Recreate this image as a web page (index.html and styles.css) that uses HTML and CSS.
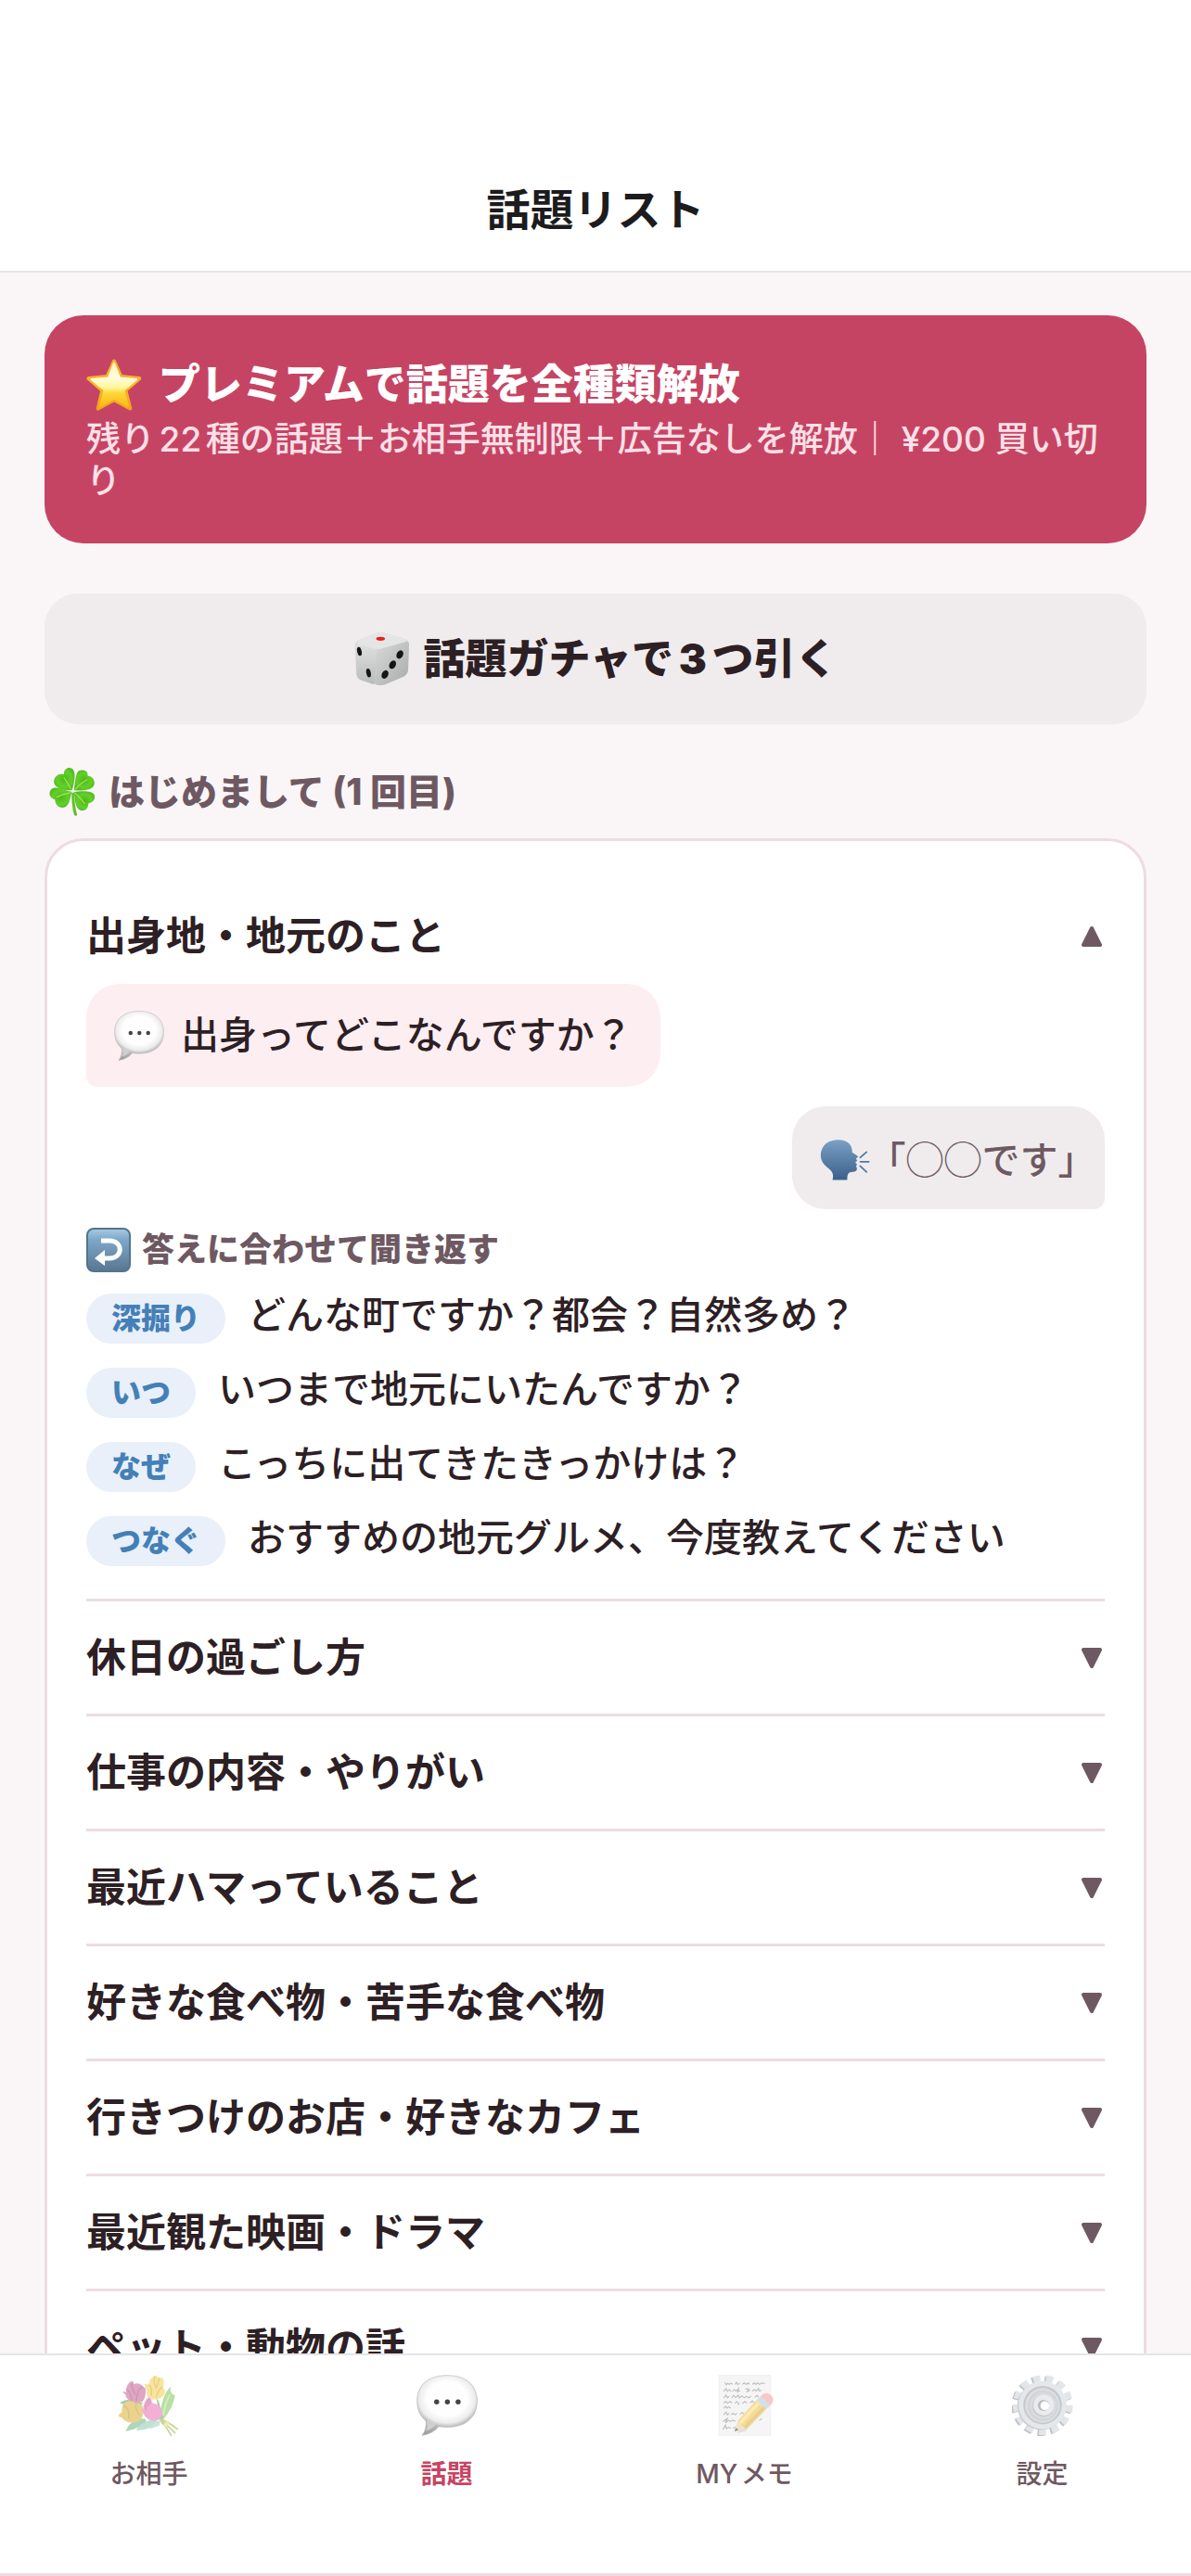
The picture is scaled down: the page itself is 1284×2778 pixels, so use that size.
FILE: index.html
```html
<!DOCTYPE html>
<html lang="ja">
<head>
    <meta charset="UTF-8">
    <meta name="viewport" content="width=device-width, initial-scale=1.0">
    <title>話題リスト</title>
    <link rel="stylesheet" href="styles.css">
</head>
<body>
    <!-- Shared icons -->
    <svg class="sprite" aria-hidden="true">
        <defs>
            <radialGradient id="bubbleFill" cx="50%" cy="45%" r="56%">
                <stop offset="0.6" stop-color="#fefefe"/>
                <stop offset="0.84" stop-color="#ececec"/>
                <stop offset="1" stop-color="#b4b4b4"/>
            </radialGradient>
            <linearGradient id="bubbleTail" x1="0" y1="0" x2="0" y2="1">
                <stop offset="0" stop-color="#d8d8d8"/>
                <stop offset="1" stop-color="#959595"/>
            </linearGradient>
        </defs>
        <symbol id="icon-bubble" viewBox="146 68 194 194">
            <path d="M176 208Q180 242 164 260Q200 254 218 230Z" fill="url(#bubbleTail)" stroke="#a8a8a8" stroke-width="2"/>
            <path d="M243 70C302 70 338 100 338 151C338 203 302 234 243 234C184 234 148 203 148 151C148 100 184 70 243 70Z" fill="url(#bubbleFill)" stroke="#b8b8b8" stroke-width="2"/>
            <path d="M178 206Q184 232 176 246Q194 242 208 224Z" fill="#cfcfcf"/>
            <circle cx="210" cy="154" r="8" fill="#444"/>
            <circle cx="244" cy="154" r="8" fill="#444"/>
            <circle cx="278" cy="154" r="8" fill="#444"/>
        </symbol>
    </svg>

    <header class="header">
        <h1>話題リスト</h1>
    </header>

    <main class="content">
        <button class="premium" type="button">
            <span class="premium-title">
                <svg class="icon-lg" viewBox="30 40 182 174" aria-hidden="true">
                    <defs>
                        <linearGradient id="starEdge" x1="0" y1="0" x2="0" y2="1">
                            <stop offset="0" stop-color="#f4a93a"/>
                            <stop offset="0.5" stop-color="#fbb52a"/>
                            <stop offset="1" stop-color="#f2a21c"/>
                        </linearGradient>
                        <linearGradient id="starFill" x1="0" y1="0" x2="0" y2="1">
                            <stop offset="0" stop-color="#fff3a8"/>
                            <stop offset="0.3" stop-color="#fffde0"/>
                            <stop offset="0.56" stop-color="#fff7a2"/>
                            <stop offset="0.7" stop-color="#fdd835"/>
                            <stop offset="1" stop-color="#fbb81c"/>
                        </linearGradient>
                    </defs>
                    <path d="M121 50L143 100L203 106L158 145L173 204L121 176L69 204L83 145L38 106L99 100Z" fill="url(#starEdge)" stroke="url(#starEdge)" stroke-width="13" stroke-linejoin="round"/>
                    <path d="M121 56L139 105L194 109L152 144L166 197L121 171L76 197L90 144L47 109L103 105Z" fill="url(#starFill)" stroke="url(#starFill)" stroke-width="7" stroke-linejoin="round"/>
                </svg>
                プレミアムで話題を全種類解放
            </span>
            <span class="premium-text">残り22種の話題＋お相手無制限＋広告なしを解放｜ ¥200 買い切り</span>
        </button>

        <button class="gacha" type="button">
            <svg class="icon-lg" viewBox="38 36 176 176" aria-hidden="true">
                <defs>
                    <linearGradient id="diceLeft" x1="0" y1="0" x2="0" y2="1">
                        <stop offset="0" stop-color="#dfe0e0"/>
                        <stop offset="1" stop-color="#b9bcbc"/>
                    </linearGradient>
                    <linearGradient id="diceRight" x1="0" y1="0" x2="1" y2="1">
                        <stop offset="0" stop-color="#d9dbdb"/>
                        <stop offset="1" stop-color="#a9abab"/>
                    </linearGradient>
                </defs>
                <path d="M40 84Q40 68 56 62L106 42Q120 37 134 41L196 58Q212 64 211 80L208 158Q207 172 195 178L136 203Q122 209 108 205L58 189Q46 184 44 170Z" fill="#d5d7d7"/>
                <path d="M42 80Q42 74 50 75L98 88Q109 92 108 104L104 196Q102 206 92 201L58 189Q47 184 45 170Z" fill="url(#diceLeft)"/>
                <path d="M211 74L208 158Q207 172 195 178L136 203Q122 209 106 204Q101 198 102 188L107 106Q108 94 120 90L200 68Q210 66 211 74Z" fill="url(#diceRight)"/>
                <path d="M56 62L106 42Q120 37 134 41L196 58Q208 63 198 69L124 90Q112 94 100 90L50 76Q43 70 56 62Z" fill="#e4e6e6"/>
                <ellipse cx="121" cy="59" rx="14" ry="6" fill="#ef1c1c"/>
                <ellipse cx="54" cy="99" rx="7" ry="14" transform="rotate(-12 54 99)" fill="#151515"/>
                <ellipse cx="83" cy="167" rx="7" ry="14" transform="rotate(-12 83 167)" fill="#151515"/>
                <ellipse cx="182" cy="109" rx="10" ry="14" transform="rotate(28 182 109)" fill="#151515"/>
                <ellipse cx="159" cy="141" rx="10" ry="14" transform="rotate(28 159 141)" fill="#151515"/>
                <ellipse cx="135" cy="172" rx="10" ry="14" transform="rotate(28 135 172)" fill="#151515"/>
            </svg>
            話題ガチャで3つ引く
        </button>

        <h2 class="section-title">
            <svg class="icon-md" viewBox="22 24 148 156" aria-hidden="true">
                <defs>
                    <radialGradient id="leaf">
                        <stop offset="0" stop-color="#4fb817"/>
                        <stop offset="0.7" stop-color="#62d02a"/>
                        <stop offset="1" stop-color="#58bd24"/>
                    </radialGradient>
                </defs>
                <path d="M94 104Q93 140 101 172Q105 180 111 174Q102 142 102 104Z" fill="#62c02c"/>
                <g fill="url(#leaf)">
                    <path d="M95 97C78 98 44 94 39 74C36 56 54 42 70 48C68 30 84 22 96 30C110 44 101 76 95 97Z"/>
                    <path d="M101 97C104 76 106 48 114 38C128 30 146 36 144 52C160 52 170 70 162 84C150 100 116 98 101 97Z"/>
                    <path d="M94 101C74 100 44 80 30 94C20 106 26 122 42 126C42 144 56 154 72 150C88 142 90 118 94 101Z"/>
                    <path d="M102 102C122 100 154 96 164 110C170 124 160 136 146 138C146 154 134 164 120 159C104 150 103 122 102 102Z"/>
                </g>
                <g fill="none" stroke="#a4ec62" stroke-width="3" stroke-linecap="round">
                    <path d="M91 93Q82 74 70 58M105 94Q122 74 142 64M90 104Q66 108 48 118M105 106Q122 122 134 138"/>
                </g>
            </svg>
            はじめまして (1 回目)
        </h2>

        <section class="card">
            <article class="topic">
                <button class="topic-head open" type="button" aria-expanded="true">出身地・地元のこと<svg class="arrow" viewBox="0 0 24 24" aria-hidden="true"><path d="M12 3L21 21H3Z"/></svg></button>
                <div class="topic-body">
                    <p class="bubble bubble-ask">
                        <svg class="icon-md" aria-hidden="true"><use href="#icon-bubble"/></svg>
                        出身ってどこなんですか？
                    </p>
                    <p class="bubble bubble-answer">
                        <svg class="icon-md" viewBox="88 136 156 156" aria-hidden="true">
                            <defs>
                                <linearGradient id="headFill" x1="0" y1="0" x2="0" y2="1">
                                    <stop offset="0" stop-color="#7ba0c4"/>
                                    <stop offset="1" stop-color="#3a618b"/>
                                </linearGradient>
                            </defs>
                            <path d="M127 282C132 262 126 254 113 244C96 232 88 216 91 197C95 170 118 156 147 157C174 158 190 173 188 196L205 207Q208 212 200 215L204 222L198 227L204 234L200 238Q208 252 196 256L181 258Q172 262 173 282Z" fill="url(#headFill)"/>
                            <path d="M213 212L233 195M214 225H240M213 238L233 257" stroke="#4a78a8" stroke-width="5" stroke-linecap="round"/>
                        </svg>
                        「◯◯です」
                    </p>
                    <h3 class="follow-title">
                        <svg class="icon-sm" viewBox="0 0 48 48" aria-hidden="true">
                            <defs>
                                <linearGradient id="keyFill" x1="0" y1="0" x2="0" y2="1">
                                    <stop offset="0" stop-color="#a9cbe2"/>
                                    <stop offset="0.25" stop-color="#7fa8c9"/>
                                    <stop offset="1" stop-color="#587690"/>
                                </linearGradient>
                            </defs>
                            <rect x="1" y="1" width="46" height="46" rx="7" fill="url(#keyFill)" stroke="#52758f" stroke-width="2"/>
                            <path d="M16 14H25C40 14 40 33 25 33H18" fill="none" stroke="#fff" stroke-width="5"/>
                            <path d="M9 33L20 24V41Z" fill="#fff"/>
                        </svg>
                        答えに合わせて聞き返す
                    </h3>
                    <ul class="follow-list">
                        <li><span class="chip">深掘り</span>どんな町ですか？都会？自然多め？</li>
                        <li><span class="chip">いつ</span>いつまで地元にいたんですか？</li>
                        <li><span class="chip">なぜ</span>こっちに出てきたきっかけは？</li>
                        <li><span class="chip">つなぐ</span>おすすめの地元グルメ、今度教えてください</li>
                    </ul>
                </div>
            </article>
            <button class="topic-head" type="button" aria-expanded="false">休日の過ごし方<svg class="arrow" viewBox="0 0 24 24" aria-hidden="true"><path d="M3 3H21L12 21Z"/></svg></button>
            <button class="topic-head" type="button" aria-expanded="false">仕事の内容・やりがい<svg class="arrow" viewBox="0 0 24 24" aria-hidden="true"><path d="M3 3H21L12 21Z"/></svg></button>
            <button class="topic-head" type="button" aria-expanded="false">最近ハマっていること<svg class="arrow" viewBox="0 0 24 24" aria-hidden="true"><path d="M3 3H21L12 21Z"/></svg></button>
            <button class="topic-head" type="button" aria-expanded="false">好きな食べ物・苦手な食べ物<svg class="arrow" viewBox="0 0 24 24" aria-hidden="true"><path d="M3 3H21L12 21Z"/></svg></button>
            <button class="topic-head" type="button" aria-expanded="false">行きつけのお店・好きなカフェ<svg class="arrow" viewBox="0 0 24 24" aria-hidden="true"><path d="M3 3H21L12 21Z"/></svg></button>
            <button class="topic-head" type="button" aria-expanded="false">最近観た映画・ドラマ<svg class="arrow" viewBox="0 0 24 24" aria-hidden="true"><path d="M3 3H21L12 21Z"/></svg></button>
            <button class="topic-head" type="button" aria-expanded="false">ペット・動物の話<svg class="arrow" viewBox="0 0 24 24" aria-hidden="true"><path d="M3 3H21L12 21Z"/></svg></button>
        </section>
    </main>

    <nav class="tabbar">
        <a class="tab" href="#partner">
            <svg class="tab-icon" viewBox="142 66 196 196" aria-hidden="true">
                <path d="M164 247Q178 208 226 206Q238 218 214 230Q190 242 164 247Z" fill="#5fae78"/>
                <path d="M198 245Q212 214 262 208Q268 226 240 236Q220 244 198 245Z" fill="#7fc4a4"/>
                <path d="M240 240Q244 222 272 212L274 228Z" fill="#8ccfb0"/>
                <path d="M272 206Q280 130 308 104Q304 128 322 132Q318 168 286 208Z" fill="#74c150"/>
                <path d="M284 196Q290 160 306 128" fill="none" stroke="#a8e070" stroke-width="6"/>
                <path d="M146 158Q160 140 200 150L222 158L196 166Z" fill="#4f9a62"/>
                <path d="M262 140L270 150L288 218L276 214Z" fill="#5a9c4c"/>
                <path d="M274 208Q298 214 330 240M274 210Q300 228 322 252M276 214Q298 236 310 260" fill="none" stroke="#8fae3c" stroke-width="5" stroke-linecap="round"/>
                <path d="M284 226L298 214L304 222L292 234Z" fill="#e8d84a"/>
                <path d="M152 120L166 122Q164 98 180 88Q190 84 190 96Q208 88 220 104L228 110Q230 140 218 152Q200 158 184 152Q166 146 164 130Z" fill="#c0508c"/>
                <path d="M166 112Q180 120 184 150M184 92Q182 110 196 130M220 104Q202 108 198 150" fill="none" stroke="#93306a" stroke-width="4"/>
                <path d="M224 94L238 98Q240 76 258 68L274 76Q288 74 286 94L284 108Q296 114 286 132Q270 148 246 144Q228 136 232 118Z" fill="#f2cc3c"/>
                <path d="M238 98Q250 104 246 134M258 70Q250 88 262 108L272 78M284 104Q268 110 262 140" fill="none" stroke="#d49c18" stroke-width="4"/>
                <path d="M142 194L152 186Q150 160 168 152Q184 146 196 156Q216 156 220 172Q224 200 208 214Q184 226 160 212Q154 202 142 200Z" fill="#d4a820"/>
                <path d="M156 164Q178 170 174 206M200 156Q190 168 208 196" fill="none" stroke="#b08614" stroke-width="4"/>
                <path d="M216 182L220 176Q222 148 238 138Q248 142 248 156Q278 160 282 186Q282 208 258 214Q230 212 222 192Z" fill="#e664ac"/>
                <path d="M224 168Q230 148 238 140Q248 144 246 158Q230 164 230 186Z" fill="#c4488e"/>
            </svg>
            お相手
        </a>
        <a class="tab active" href="#topics" aria-current="page">
            <svg class="tab-icon" aria-hidden="true"><use href="#icon-bubble"/></svg>
            話題
        </a>
        <a class="tab" href="#memo">
            <svg class="tab-icon" viewBox="1106 68 196 196" aria-hidden="true">
                <rect x="1121" y="70" width="165" height="193" fill="#ececec" stroke="#dcdcdc" stroke-width="2"/>
                <g fill="none" stroke="#777" stroke-width="3">
                    <path d="M1140 92l4 8 5-5 5 4 6-4 5 4M1172 99l6-7 3 7 8-4M1196 99l6-5 6 5 6-5 6 5M1228 99l6-5 5 5 6-5 6 5 7-5 10 2"/>
                    <path d="M1136 121l8-9 4 9 6-5 6 5M1164 121l7-6 5 5 8-8-3 11 8-5M1206 113h10l-5 9 10-4M1228 121l6-6 6 5 8-8 2 8 8-2"/>
                    <path d="M1136 142l8-9 4 9 6-5M1162 142l6-8 7 7 8-8 3 9 8-6 8 5 8-4 7 5 8-6M1236 140l8-6 4 6"/>
                    <path d="M1136 158l7-4 6 5 7-5 7 4M1172 160l6-6 7 5-3 6M1196 160l8-6 7 4M1220 158l8-6 6 6"/>
                    <path d="M1136 175l7-6 4 6 6-4 6 4M1136 196l8-9 4 9 6-5M1160 196l6-5 7 5 6-5M1188 194l8-5 5 5"/>
                    <path d="M1134 218l8-6 6-4-6 14 9-8 7 4 8-5 8 4M1250 214l8-5M1134 244l8-15 3 12 7-5 8 4M1166 240l8-5"/>
                </g>
                <path d="M1178 254L1204 250L1290 160L1276 148Z" fill="#999" opacity="0.5"/>
                <path d="M1171 250L1181 216L1208 240Z" fill="#e8c897"/>
                <path d="M1171 250L1175 237L1184 245Z" fill="#333"/>
                <path d="M1181 216L1241 150L1272 178L1208 243L1200 236L1192 232L1190 223Z" fill="#eeb82c"/>
                <path d="M1186 218L1244 155L1252 162L1194 226Z" fill="#fad968"/>
                <path d="M1206 240L1270 176L1263 170L1201 233Z" fill="#d59d20"/>
                <path d="M1241 150L1254 137L1286 166L1272 178Z" fill="#aac2d2"/>
                <path d="M1254 137Q1268 122 1285 131Q1304 146 1286 166Z" fill="#ee9098"/>
            </svg>
            MYメモ
        </a>
        <a class="tab" href="#settings">
            <svg class="tab-icon" viewBox="92 68 194 194" aria-hidden="true">
                <g fill="none" stroke-width="24" stroke-dasharray="22 18">
                    <circle cx="185" cy="167" r="83" pathLength="520" stroke="#82888c"/>
                    <circle cx="190" cy="164" r="83" pathLength="520" stroke="#c9ced3"/>
                </g>
                <circle cx="185" cy="167" r="76" fill="#969b9f"/>
                <circle cx="189" cy="164" r="76" fill="#cdd2d8"/>
                <circle cx="189" cy="164" r="61" fill="#8e9498"/>
                <circle cx="189" cy="165" r="55" fill="#bbc0c4"/>
                <circle cx="190" cy="166" r="48" fill="#a4aaae"/>
                <circle cx="191" cy="166" r="43" fill="#b3b9bd"/>
                <circle cx="191" cy="167" r="34" fill="#8f9599"/>
                <circle cx="193" cy="164" r="33" fill="#d4d8de"/>
                <circle cx="192" cy="165" r="18" fill="#777c80"/>
                <circle cx="196" cy="166" r="14" fill="#fff"/>
            </svg>
            設定
        </a>
    </nav>
</body>
</html>
```
FILE: styles.css
```css
* {
    box-sizing: border-box;
}
body {
    font-family: Inter, "Noto Sans CJK JP", sans-serif;
    text-autospace: normal;
    margin: 0;
    display: flex;
    flex-direction: column;
    height: 100vh;
    background-color: #faf6f8;
    color: #2d2024;
}
button {
    font: inherit;
    color: inherit;
    border: none;
    cursor: pointer;
}
h1, h2, h3, p, ul {
    margin: 0;
    padding: 0;
}
.sprite {
    position: absolute;
    width: 0;
    height: 0;
}
.header {
    padding: 184px 48px 24px;
    background-color: #fff;
    border-bottom: 2px solid #e5e5e7;
    text-align: center;
    color: #1c1c1e;
}
.header h1 {
    font-size: 47px;
    line-height: 84px;
    font-weight: 700;
}
.content {
    flex: 1;
    min-height: 0;
    overflow: hidden;
    padding: 46px 48px 0;
}

/* Icon sizes */
.icon-lg {
    width: 60px;
    height: 60px;
    flex: none;
}
.icon-md {
    width: 54px;
    height: 54px;
    flex: none;
}
.icon-sm {
    width: 48px;
    height: 48px;
    flex: none;
}

.premium {
    display: flex;
    flex-direction: column;
    gap: 6px;
    width: 100%;
    padding: 45px;
    border-radius: 42px;
    background-color: #c64463;
    text-align: left;
}
.premium-title {
    display: flex;
    align-items: center;
    gap: 18px;
    font-size: 45px;
    line-height: 60px;
    font-weight: 900;
    color: #fff;
}
.premium-text {
    font-size: 37px;
    line-height: 45px;
    font-weight: 500;
    color: #fde0e8;
}
.gacha {
    display: flex;
    justify-content: center;
    align-items: center;
    gap: 15px;
    width: 100%;
    margin-top: 54px;
    padding: 36px;
    border-radius: 36px;
    background-color: #f0eced;
    font-size: 45px;
    line-height: 69px;
    font-weight: 900;
}
.section-title {
    display: flex;
    align-items: center;
    gap: 12px;
    margin-top: 43px;
    padding-left: 3px;
    font-size: 39px;
    line-height: 60px;
    font-weight: 800;
    color: #6e5962;
}
.card {
    margin-top: 20px;
    padding: 42px;
    border: 3px solid #eedce1;
    border-radius: 42px;
    background-color: #fff;
}
.topic-head {
    display: flex;
    justify-content: space-between;
    align-items: center;
    width: 100%;
    padding: 30px 0;
    border-bottom: 3px solid #eedce1;
    background: none;
    font-size: 43px;
    line-height: 61px;
    font-weight: 600;
    text-align: left;
}
.topic-head.open {
    padding-bottom: 21px;
    border-bottom: none;
}
.arrow {
    width: 24px;
    height: 24px;
    margin-right: 2px;
    fill: #6e5962;
    stroke: #6e5962;
    stroke-width: 4;
    stroke-linejoin: round;
}
.topic-body {
    display: flex;
    flex-direction: column;
    padding-bottom: 35px;
    border-bottom: 3px solid #eedce1;
}
.bubble {
    display: flex;
    align-items: center;
    gap: 18px;
    padding: 27px 30px;
    border-radius: 36px;
    font-size: 41px;
    line-height: 57px;
    font-weight: 500;
}
.bubble-ask {
    align-self: flex-start;
    border-bottom-left-radius: 12px;
    background-color: #fdeef2;
}
.bubble-answer {
    align-self: flex-end;
    margin-top: 21px;
    border-bottom-right-radius: 12px;
    background-color: #f0eced;
    font-family: "Noto Sans CJK JP", sans-serif;
    color: #6e5962;
    font-feature-settings: "halt";
}
.follow-title {
    display: flex;
    align-items: center;
    gap: 12px;
    margin-top: 18px;
    font-size: 35px;
    line-height: 51px;
    font-weight: 800;
    color: #6e5962;
}
.follow-list {
    display: flex;
    flex-direction: column;
    gap: 19px;
    margin-top: 15px;
    list-style: none;
}
.follow-list li {
    display: flex;
    align-items: flex-start;
    gap: 24px;
    font-size: 41px;
    line-height: 60px;
    font-weight: 500;
}
.chip {
    margin-top: 7px;
    padding: 0 27px;
    border-radius: 27px;
    background-color: #e9f0f9;
    font-size: 32px;
    line-height: 54px;
    font-weight: 800;
    color: #4480b8;
}

.tabbar {
    display: flex;
    border-top: 2px solid #e5e5e7;
    border-bottom: 3px solid #eedce1;
    background-color: #fff;
}
.tab {
    flex: 1;
    display: flex;
    flex-direction: column;
    align-items: center;
    gap: 21px;
    padding: 21px 0 87px;
    font-size: 28px;
    line-height: 40px;
    font-weight: 500;
    text-decoration: none;
    color: #6e5962;
}
.tab-icon {
    width: 66px;
    height: 66px;
    opacity: 0.5;
}
.tab.active {
    font-weight: 700;
    color: #c64463;
}
.tab.active .tab-icon {
    opacity: 1;
}
```
